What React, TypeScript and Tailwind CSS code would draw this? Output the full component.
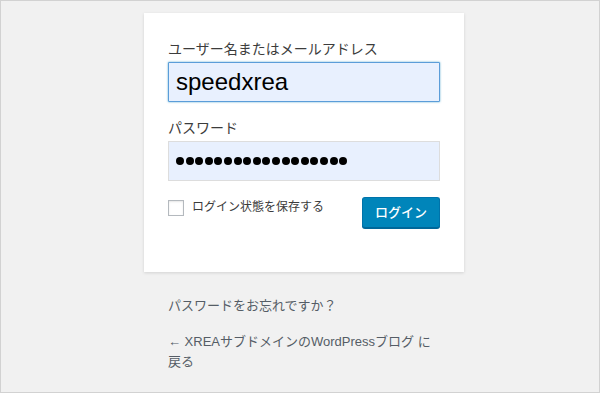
export default function App() {
  const font = { fontFamily: '"Liberation Sans", "Noto Sans CJK JP", sans-serif' };
  const dots = Array.from({ length: 18 });

  return (
    <div
      className="box-border flex h-[393px] w-full justify-center overflow-hidden border border-[#d2d2d2] bg-[#f1f1f1] pl-[8px] text-[#444]"
      style={font}
    >
      <div className="w-[320px] pt-[12px]">
        {/* login form card */}
        <div className="bg-white px-6 pt-[26px] pb-[44px] shadow-[0_1px_3px_rgba(0,0,0,0.13)]">
          <label className="block text-[14px] leading-[21px] text-[#3c3c3c]">ユーザー名またはメールアドレス</label>
          <div className="mt-[2px] box-border flex h-[40px] w-full items-center rounded-[1px] border border-[#5b9dd9] bg-[#e8f0fe] px-[7px] text-[24px] text-black shadow-[0_0_2px_rgba(30,140,190,0.8)]">
            speedxrea
          </div>

          <label className="mt-[16px] block text-[14px] leading-[21px] text-[#3c3c3c]">パスワード</label>
          <div className="mt-[2px] box-border flex h-[40px] w-full items-center gap-[1.6px] border border-[#dddddd] bg-[#e8f0fe] px-[7px]">
            {dots.map((_, i) => (
              <span key={i} className="block h-[8px] w-[8px] rounded-full bg-black" />
            ))}
          </div>

          <div className="mt-[16px] flex items-start justify-between">
            <div className="flex items-center gap-[8px] pt-[1px]">
              <span className="block h-[16px] w-[16px] border border-[#b4b9be] bg-white shadow-[inset_0_1px_2px_rgba(0,0,0,0.1)]" />
              <span className="text-[12px] leading-[19px] text-[#3c3c3c]">ログイン状態を保存する</span>
            </div>
            <button className="h-[31px] w-[78px] rounded-[3px] border border-[#0073aa] border-b-[#006799] bg-[#0085ba] text-[13px] font-medium text-white shadow-[0_1px_0_#006799]">
              ログイン
            </button>
          </div>
        </div>

        {/* links under the form */}
        <div className="px-6 pt-[24px] text-[13px] leading-[20px] text-[#555d66]">
          <p>パスワードをお忘れですか？</p>
          <p className="mt-[16px]">
            ← XREAサブドメインのWordPressブログ に
            <br />
            戻る
          </p>
        </div>
      </div>
    </div>
  );
}
